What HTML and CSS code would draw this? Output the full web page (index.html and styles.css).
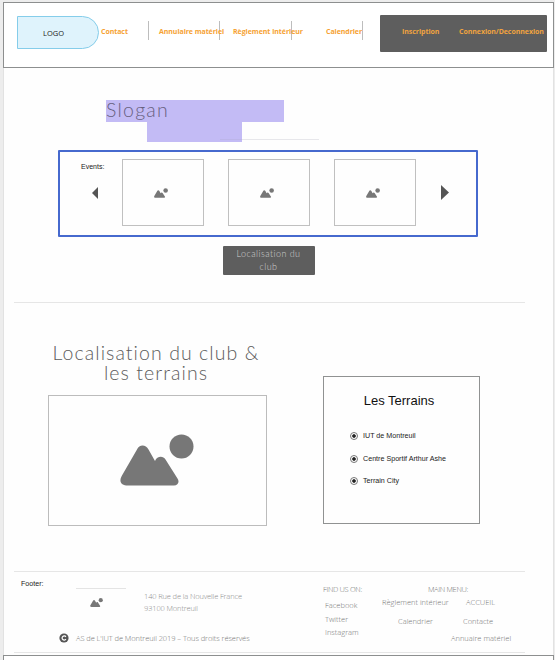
FILE: index.html
```
<!DOCTYPE html>
<html lang="fr">
<head>
<meta charset="utf-8">
<title>Localisation du club</title>
<link rel="stylesheet" href="styles.css">
</head>
<body>
<svg width="0" height="0" class="defs" aria-hidden="true">
  <symbol id="picture" viewBox="0 0 74 52">
    <path d="M17 15.500c2.200-5.500 8.800-5.500 11.500 0l6.500 11.500c2-5 8-5.500 10.500-1.500l12 19c2.300 3.500.5 7-3.500 7H8c-6.500 0-9.500-4-6.300-9.500z"/>
    <circle cx="61.500" cy="12.500" r="12"/>
  </symbol>
</svg>
<div class="page">
  <header class="header">
    <div class="logo">LOGO</div>
    <nav class="nav">
      <a class="contact">Contact</a>
      <a class="annuaire">Annuiaire matériel</a>
      <a class="reglement">Règlement intérieur</a>
      <a class="calendrier">Calendrier</a>
    </nav>
    <div class="account"><a class="signup">Inscription</a><a class="login">Connexion/Deconnexion</a></div>
  </header>
  <main>
    <section class="slogan">
      <h1>Slogan</h1>
      <div class="second"><i></i></div>
    </section>
    <section class="events">
      <span class="label">Events:</span>
      <div class="carousel">
        <svg class="prev" viewBox="0 0 6 12"><path d="M6 0v12L0 6z"/></svg>
        <div class="card"><svg><use href="#picture"/></svg></div>
        <div class="card"><svg><use href="#picture"/></svg></div>
        <div class="card"><svg><use href="#picture"/></svg></div>
        <svg class="next" viewBox="0 0 8 15"><path d="M0 0v15l8-7.500z"/></svg>
      </div>
    </section>
    <a class="button">Localisation du<br>club</a>
    <hr>
    <section class="places">
      <div class="location">
        <h2>Localisation du club &amp;<br>les terrains</h2>
        <div class="map"><svg><use href="#picture"/></svg></div>
      </div>
      <div class="terrains">
        <h3>Les Terrains</h3>
        <ul>
          <li><i></i><span class="t1">IUT de Montreuil</span></li>
          <li><i></i><span class="t2">Centre Sportif Arthur Ashe</span></li>
          <li><i></i><span class="t3">Terrain City</span></li>
        </ul>
      </div>
    </section>
  </main>
  <footer class="footer">
    <span class="label">Footer:</span>
    <div class="about">
      <div class="contact-row">
        <div class="brand"><svg><use href="#picture"/></svg></div>
        <address>140 Rue de la Nouvelle France<br>93100 Montreuil</address>
      </div>
      <div class="copyright">
        <svg viewBox="0 0 10 10"><circle cx="5" cy="5" r="4.600"/><path d="M6.900 3.800A2.100 2.100 0 1 0 6.900 6.200"/></svg>
        <span>AS de L'IUT de Montreuil 2019 – Tous droits réservés</span>
      </div>
    </div>
    <div class="social">
      <h4>FIND US ON:</h4>
      <a>Facebook</a><a>Twitter</a><a>Instagram</a>
    </div>
    <div class="menu">
      <h4>MAIN MENU:</h4>
      <div class="row r1"><a>Règlement intérieur</a><a>ACCUEIL</a></div>
      <div class="row r2"><a>Calendrier</a><a>Contacte</a></div>
      <div class="row r3"><a>Annuaire matériel</a></div>
    </div>
  </footer>
</div>
<div class="next-page"></div>
</body>
</html>
```
FILE: styles.css
```
* { box-sizing: border-box; }
body { margin: 0; height: 660px; overflow: hidden; background: #ededed; padding: 2px 1px 0 3px; font-family: "Liberation Sans", sans-serif; color: #222; }
h1, h2, h3, h4, ul { margin: 0; padding: 0; font-weight: 300; }
svg { display: block; fill: #777; }
.defs { float: left; }
a, span { white-space: nowrap; }
.page { height: 653px; background: #fefefe; border-left: 1px solid #e2e2e2; border-right: 1px solid #e2e2e2; }

.header { display: flex; height: 66px; margin: 0 -1px; border: 1px solid #8d8f8f; background: #fff; padding: 12px 0 0 13px; }
.logo { width: 82px; height: 33px; margin-top: 1px; padding-right: 9px; border: 1px solid #85cdea; border-radius: 0 17px 17px 0; background: #dff3fc; font: 7.500px/33px "Open Sans", sans-serif; text-align: center; }
.nav { display: flex; height: 19px; margin-top: 6px; font: 700 7px/21px "Open Sans", sans-serif; letter-spacing: -.06px; color: #f6a233; }
.nav a { border-right: 1px solid #bdbdbd; }
.contact { width: 50px; padding-left: 2px; }
.annuaire { width: 71px; padding-left: 10px; }
.reglement { width: 72px; padding-left: 13px; letter-spacing: -.03px; }
.calendrier { width: 71px; padding-left: 34px; }
.account { display: flex; width: 167px; height: 37px; margin-left: 17px; border-radius: 1px; background: #5e5e5e; font: 700 7px/33px "Open Sans", sans-serif; letter-spacing: -.05px; color: #f0a33f; }
.signup { width: 57px; margin-left: 22px; }

.slogan { width: 213px; height: 42px; margin: 32px 0 0 102px; }
.slogan h1 { width: 178px; height: 22px; background: #c3bbf5; color: #68617f; font: 300 19.500px/20px Lato, sans-serif; letter-spacing: 1.250px; }
.second { display: flex; align-items: flex-end; width: 95px; height: 20px; margin-left: 41px; padding: 0 0 2px 73px; background: #c3bbf5; }
.second i { flex: 0 0 99px; height: 1px; background: linear-gradient(90deg, #bcb5e9 22px, #e7e7eb 22px); }

.events { width: 420px; height: 87px; margin: 8px 0 0 54px; border: 2px solid #4669ce; border-radius: 1px; }
.label { display: block; font-size: 7px; line-height: 8px; }
.events .label { height: 19px; padding: 11px 0 0 21px; }
.carousel { display: flex; align-items: center; gap: 24px; height: 67px; margin-top: -12px; padding-left: 32px; }
.card { display: grid; place-items: center; width: 82px; height: 67px; border: 1px solid #c0c0c0; }
.card svg { width: 14px; height: 10px; margin-left: -4px; }
.prev { width: 6px; height: 12px; }
.next { width: 8px; height: 15px; margin-left: 1px; }
.prev, .next { fill: #555; }
.button { display: block; width: 92px; height: 29px; margin: 9px 0 0 219px; border-radius: 1px; padding: 1px 1px 0 0; background: #5e5e5e; color: #d0d0d0; text-align: center; font: 300 9px/13px Lato, sans-serif; letter-spacing: .45px; }
hr { width: 511px; height: 1px; margin: 27px 0 0 10px; border: 0; background: #e6e6e6; }

.places { display: flex; align-items: flex-start; height: 268px; padding: 40px 0 0 44px; }
.location { width: 219px; }
h2 { height: 52px; margin: 0 -3px 0 -6px; text-align: center; color: #5c5c5c; font: 300 19.500px/20px Lato, sans-serif; letter-spacing: 1.070px; }
.map { height: 131px; border: 1px solid #bcbcbc; padding: 38px 0 0 71px; }
.map svg { width: 74px; height: 52px; }
.terrains { width: 157px; height: 148px; margin: 33px 0 0 56px; border: 1px solid #909292; }
h3 { margin-top: 16px; padding-right: 5px; font-size: 13px; line-height: 16px; text-align: center; color: #111; }
ul { margin-top: 16px; padding-left: 26px; list-style: none; }
li { display: flex; align-items: center; height: 22.500px; font-size: 7.150px; }
li i { width: 8px; height: 8px; margin-right: 5px; border: 1px solid #777; border-radius: 50%; background: radial-gradient(circle, #222 1.400px, #fff 2.200px); }

.footer { display: flex; align-items: flex-start; width: 511px; height: 82px; margin-left: 10px; border-top: 1px solid #e6e6e6; border-bottom: 1px solid #e6e6e6; color: #757575; font: 300 7.500px/12px "Open Sans", sans-serif; }
.footer .label { width: 38px; margin-left: 7px; padding-top: 8px; font: 7.100px/8px "Liberation Sans", sans-serif; color: #222; }
.about { width: 264px; padding-top: 16px; }
.contact-row { display: flex; height: 44px; }
.brand { width: 50px; height: 30px; margin-left: 17px; border-top: 1px solid #e4e4e4; padding: 9px 0 0 14px; }
.brand svg { width: 13px; height: 9px; }
address { margin: 2px 0 0 18px; font-style: normal; color: #8c8c8c; letter-spacing: -.14px; }
.copyright { display: flex; align-items: center; letter-spacing: -.08px; }
.copyright svg { width: 10px; height: 10px; margin-right: 7px; fill: #555; }
.copyright path { fill: none; stroke: #fff; stroke-width: 1.200; }
.social { width: 59px; padding-top: 11px; }
.social h4, .menu h4 { font: inherit; white-space: nowrap; letter-spacing: -.35px; }
.social a { display: block; height: 13.500px; margin-left: 2px; }
.social h4 { margin-bottom: 4px; }
.menu { padding-top: 11px; }
.menu h4 { padding-left: 46px; }
.row { display: flex; height: 12px; }
.r1 { margin-top: 1px; }
.r1 a:first-child { width: 84px; }
.r2 { margin-top: 7px; padding-left: 16px; }
.r2 a:first-child { width: 65px; }
.r3 { margin-top: 5px; padding-left: 69px; }

.next-page { height: 20px; border: 1px solid #8d8f8f; background: #fff; }
```
